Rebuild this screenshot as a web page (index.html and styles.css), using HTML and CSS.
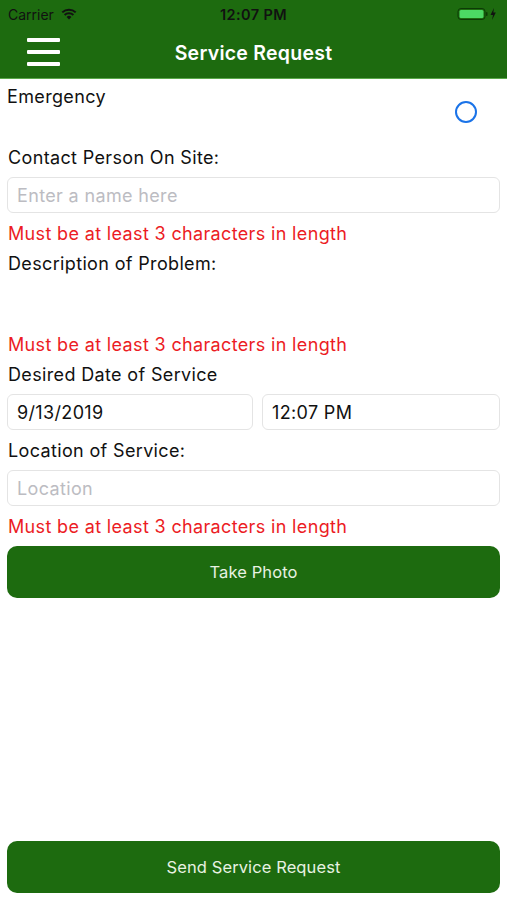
FILE: index.html
```html
<!DOCTYPE html>
<html lang="en">
<head>
  <meta charset="UTF-8" />
  <title>Service Request</title>
  <meta name="viewport" content="width=device-width, initial-scale=1.0" />
  <link rel="stylesheet" href="styles.css">
</head>
<body>

<div class="page">
  <header class="top-bar">
    <div class="status-bar">
      <div class="status-left">
        <span>Carrier</span>
        <svg class="wifi" width="16" height="12" viewBox="0 0 16 12">
          <path d="M8 11.5 L5.6 8.9 A3.6 3.6 0 0 1 10.4 8.9 Z" fill="#111" />
          <path d="M3.6 6.9 A6.4 6.4 0 0 1 12.4 6.9" stroke="#111" stroke-width="2" fill="none" />
          <path d="M1.3 4.4 A9.6 9.6 0 0 1 14.7 4.4" stroke="#111" stroke-width="2" fill="none" />
        </svg>
      </div>
      <div class="status-time">12:07 PM</div>
      <div class="status-right">
        <svg width="42" height="14" viewBox="0 0 42 14">
          <rect x="1" y="1.5" width="27" height="11" rx="3" fill="none" stroke="#0d3a06" stroke-width="1" />
          <rect x="2.5" y="3" width="24" height="8" rx="1.5" fill="#4cd964" />
          <rect x="29" y="5" width="1.5" height="4" rx="0.7" fill="#0d3a06" />
          <path d="M37 1 L33.5 8 L36 8 L35 13 L38.8 5.6 L36.3 5.6 Z" fill="#111" />
        </svg>
      </div>
    </div>
    <nav class="nav-bar">
      <button class="menu-button" aria-label="Menu">
        <span></span><span></span><span></span>
      </button>
      <h1>Service Request</h1>
    </nav>
  </header>

  <main class="form">
    <div class="emergency-row">
      <label>Emergency</label>
      <span class="radio"></span>
    </div>

    <label class="field-label">Contact Person On Site:</label>
    <input class="text-input" type="text" placeholder="Enter a name here" />
    <div class="error">Must be at least 3 characters in length</div>

    <label class="field-label">Description of Problem:</label>
    <textarea class="description"></textarea>
    <div class="error">Must be at least 3 characters in length</div>

    <label class="field-label">Desired Date of Service</label>
    <div class="date-row">
      <input class="text-input" type="text" value="9/13/2019" />
      <input class="text-input" type="text" value="12:07 PM" />
    </div>

    <label class="field-label">Location of Service:</label>
    <input class="text-input" type="text" placeholder="Location" />
    <div class="error">Must be at least 3 characters in length</div>

    <button class="green-button">Take Photo</button>

    <button class="green-button send-button">Send Service Request</button>
  </main>
</div>

</body>
</html>
```

FILE: styles.css
```css
* {
  box-sizing: border-box;
}

body {
  margin: 0;
  font-family: Inter, "Noto Sans", sans-serif;
  background: #fff;
  color: #111;
}

.page {
  display: flex;
  flex-direction: column;
  min-height: 100vh;
}

.top-bar {
  background: #1d6b0f;
  border-bottom: 1px solid #5aa84a;
}

.status-bar {
  height: 28px;
  display: flex;
  align-items: center;
  justify-content: space-between;
  padding: 0 8px 0 8px;
  font-size: 14px;
  color: #111;
}

.status-left {
  display: flex;
  align-items: center;
  gap: 7px;
  width: 120px;
}

.status-time {
  font-weight: 600;
  letter-spacing: 0.4px;
  font-size: 14.5px;
}

.status-right {
  width: 120px;
  display: flex;
  justify-content: flex-end;
}

.nav-bar {
  height: 50px;
  position: relative;
  display: flex;
  align-items: center;
  justify-content: center;
}

.nav-bar h1 {
  margin: 0;
  font-size: 19.5px;
  font-weight: 600;
  letter-spacing: 0.25px;
  color: #fff;
}

.menu-button {
  position: absolute;
  left: 27px;
  top: 10px;
  width: 34px;
  height: 28px;
  padding: 0;
  border: none;
  background: none;
  display: flex;
  flex-direction: column;
  justify-content: space-between;
}

.menu-button span {
  display: block;
  height: 4px;
  width: 33px;
  background: #fff;
  border-radius: 1px;
}

.form {
  flex: 1;
  display: flex;
  flex-direction: column;
  gap: 10px;
  padding: 0 7px 7px 7px;
  font-size: 18px;
  letter-spacing: 0.35px;
}

.emergency-row {
  height: 58px;
  display: flex;
  justify-content: space-between;
  padding-top: 9px;
  line-height: 18px;
}

.radio {
  width: 22px;
  height: 22px;
  margin: 13px 23px 0 0;
  border: 2px solid #1a73e8;
  border-radius: 50%;
}

.field-label,
.error {
  line-height: 18px;
  padding-top: 2px;
  margin-left: 1px;
}

.error {
  color: #ec1c24;
}

.text-input {
  width: 100%;
  height: 36px;
  border: 1px solid #e4e4e4;
  border-radius: 6px;
  padding: 0 9px;
  font-family: inherit;
  font-size: 18px;
  letter-spacing: 0.35px;
  color: #111;
  outline: none;
}

.text-input::placeholder {
  color: #bcbcc2;
}

.description {
  height: 41px;
  border: none;
  resize: none;
  outline: none;
  font-family: inherit;
}

.date-row {
  display: flex;
  gap: 9px;
}

.date-row .text-input:first-child {
  width: 246px;
  flex: none;
}

.green-button {
  height: 52px;
  border: none;
  border-radius: 10px;
  background: #1d6b0f;
  color: #e8f2e2;
  font-family: inherit;
  font-size: 16.5px;
  letter-spacing: 0.1px;
  cursor: pointer;
}

.send-button {
  margin-top: auto;
}
```
